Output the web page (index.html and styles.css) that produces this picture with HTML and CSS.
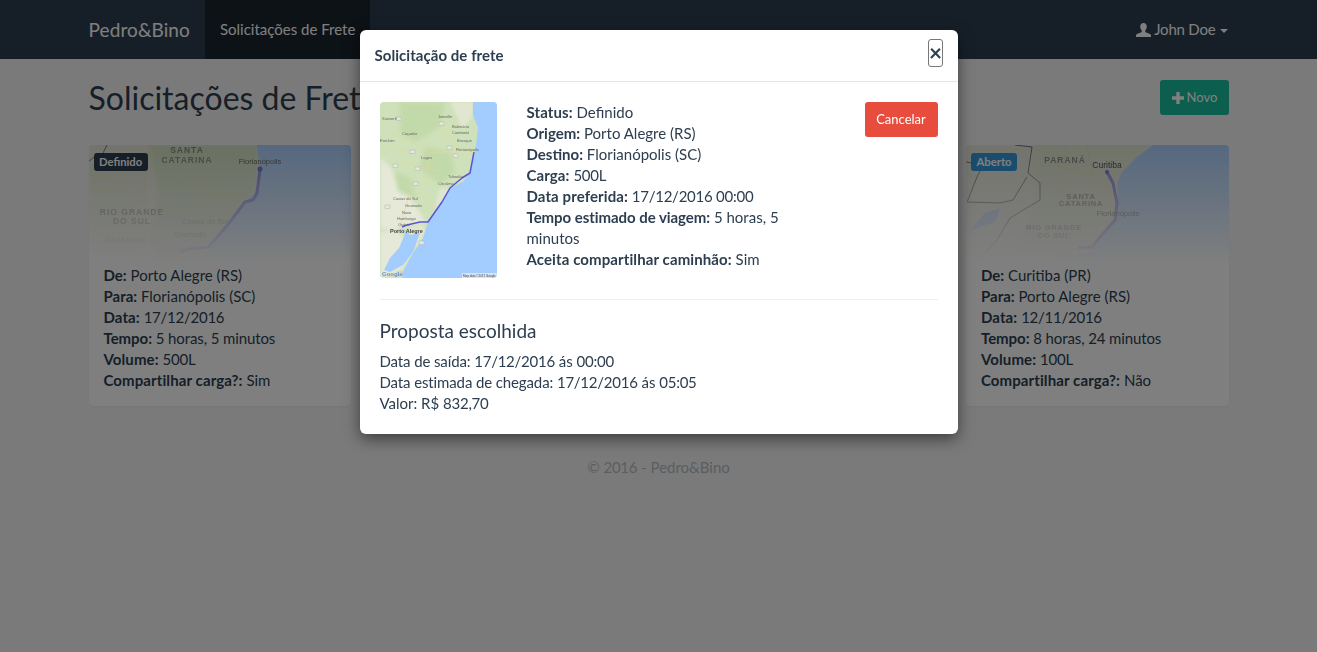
FILE: index.html
```html
<!DOCTYPE html>
<html lang="pt-BR">
<head>
<meta charset="utf-8">
<title>Solicitações de Frete</title>
<link rel="stylesheet" href="styles.css">
</head>
<body>
<nav class="navbar">
  <div class="container nav-inner">
    <a class="brand">Pedro&amp;Bino</a>
    <a class="nav-link active">Solicitações de Frete</a>
    <a class="nav-link user">
      <svg class="user-icon" viewBox="0 0 15 14" width="15" height="14"><path d="M7.5 0C5.4 0 4.2 1.5 4.2 3.6c0 1.5.6 3 1.5 3.8v1.2c0 .5-.5.8-1.6 1.2C2.3 10.5.4 11 0 12.2V14h15v-1.8c-.4-1.2-2.3-1.7-4.1-2.4-1.1-.4-1.6-.7-1.6-1.2V7.4c.9-.8 1.5-2.3 1.5-3.8C10.800 1.500 9.600 0 7.500 0z"/></svg>
      <span class="user-name">John Doe</span><i class="caret"></i>
    </a>
  </div>
</nav>

<main class="container">
  <header class="page-head">
    <h1>Solicitações de Frete</h1>
    <button class="btn btn-new">
      <svg viewBox="0 0 12 12" width="12" height="12"><path d="M4.300 0h3.400v4.300H12v3.400H7.700V12H4.300V7.700H0V4.300h4.300z"/></svg>
      Novo
    </button>
  </header>

  <section class="cards">
    <article class="card">
      <div class="map">
        <svg viewBox="0 0 262 120" width="262" height="120">
          <rect class="land" width="262" height="120"/>
          <path class="green" d="M60 0h108l2 20-2 20-3 10-10 6-15 20-18 24-15 20H70l-10-30 10-40z"/>
          <path class="green-soft" d="M0 20h60l-5 40 10 30-30 30H0z"/>
          <path class="road" d="M0 45h50l30-10 60 15M60 0l-5 45 10 50M20 85l60-20 50 15M150 10l-30 30-10 50M0 30l40 5 20 20M90 20l30 30 30 5M110 60l30-30"/>
          <path class="border" d="M18 0l-5 10M0 16l8-6"/>
          <path class="ocean" d="M168 0l2 20-2 20-3 10-10 6-15 20-18 24-17 20h157V0z"/>
          <path class="route" d="M171 24l-3 24-4 7-8 2-16 21-10 12-11 12-19 2-9 3"/>
          <circle class="pin" cx="171" cy="24" r="2.500"/>
          <text class="state" x="98" y="8">SANTA</text>
          <text class="state" x="98" y="18">CATARINA</text>
          <text class="city" x="171" y="19">Florianópolis</text>
          <text class="state" x="43" y="70">RIO GRANDE</text>
          <text class="state" x="43" y="79">DO SUL</text>
          <text class="city faint" x="116" y="79">Caxias do Sul</text>
          <text class="city faint" x="101" y="92">Gramado</text>
          <text class="city faint" x="36" y="97">Santa Maria</text>
          <text class="city faint" x="91" y="116">Porto Alegre</text>
        </svg>
        <span class="badge badge-dark">Definido</span>
      </div>
      <div class="info">
        <div><b class="k">De:</b> Porto Alegre (RS)</div>
        <div><b class="k">Para:</b> Florianópolis (SC)</div>
        <div><b>Data:</b> <span class="num">17/12/2016</span></div>
        <div><b class="te">Tempo:</b> <span class="time">5 horas, 5 minutos</span></div>
        <div><b>Volume:</b> <span class="num">500</span>L</div>
        <div><b>Compartilhar carga?:</b> Sim</div>
      </div>
    </article>

    <article class="card"></article>
    <article class="card"></article>

    <article class="card">
      <div class="map">
        <svg viewBox="0 0 263 120" width="263" height="120">
          <rect class="land" width="263" height="120"/>
          <path class="green-soft" d="M66 0h121l-16 12-15 15-5 11 1 20-3 17-15 17-8 10-22 18H40l30-60z"/>
          <path class="lake" d="M4 85l14-16 16-6-5 14-15 5z"/>
          <path class="road" d="M80 20l60 10M90 45l60-5M60 75l80 5M100 0l-5 60M120 0l10 40M75 35l30 25"/>
          <path class="border" d="M49 0l17 2-4 26 12 10v17L44 73 31 95 8 120M0 17l17 3-6 12-10 25 33 1 13-3 14-23"/>
          <path class="ocean" d="M187 0l-16 12-15 15-5 11 1 20-3 17-15 17-8 10-22 18h159V0z"/>
          <path class="route" d="M141 27l6 11 4 20-2 17-15 17-8 10-14 1"/>
          <circle class="pin" cx="141" cy="27" r="2"/>
          <text class="state" x="99" y="18">PARANÁ</text>
          <text class="city dark" x="141" y="23">Curitiba</text>
          <text class="state small" x="115" y="54">SANTA</text>
          <text class="state small" x="115" y="61">CATARINA</text>
          <text class="city" x="152" y="71">Florianópolis</text>
          <text class="state small" x="88" y="85">RIO GRANDE</text>
          <text class="state small" x="88" y="93">DO SUL</text>
          <text class="city faint" x="112" y="112">Porto Alegre</text>
        </svg>
        <span class="badge badge-blue">Aberto</span>
      </div>
      <div class="info">
        <div><b class="k">De:</b> Curitiba (PR)</div>
        <div><b class="k">Para:</b> Porto Alegre (RS)</div>
        <div><b>Data:</b> <span class="num">12/11/2016</span></div>
        <div><b class="te">Tempo:</b> <span class="time">8 horas, 24 minutos</span></div>
        <div><b>Volume:</b> <span class="num">100</span>L</div>
        <div><b>Compartilhar carga?:</b> Não</div>
      </div>
    </article>
  </section>

  <footer class="foot">© <span class="num">2016</span> - Pedro&amp;Bino</footer>
</main>

<div class="backdrop"></div>

<div class="modal">
  <div class="modal-head">
    <h4>Solicitação de frete</h4>
    <button class="close">×</button>
  </div>
  <div class="modal-body">
    <div class="modal-grid">
      <svg class="route-map" viewBox="0 0 117 176" width="117" height="176">
        <rect class="mland" width="117" height="176"/>
        <path class="mdark" d="M20 0h45l-5 25-25 15-15-10zM45 45l25 5 5 20-15 12-20-15zM15 70l15 5 5 20-18 5z"/>
        <path class="mwhite" d="M0 55l12 12 6 22 12 6 16 25-24 5-10 5-12-5zM0 130h20l12 20-12 20-20 6z"/>
        <path class="mwhite2" d="M70 0l23 0 0 13-10 15zM60 86l10 0-8 14-8 8zM30 125l12-3 4 8-8 14-8 4z"/>
        <path class="mroad" d="M10 30l40 20 45 0M50 50l-5 40 10 20M20 60l40 10M75 20l-20 30M30 90l-10 35M0 45l30 5M60 20l20 30"/>
        <path class="ocean-m" d="M93 0l0 13 5 13-3 24-5 20-7 10-13 6-8 14-14 20-5 16-13 20-7 14-1 6h95V0z"/>
        <path class="ocean-m" d="M22 126l8 7 10-2-7 19-10 13-13 7-6-2 6-12 9-10 6-14z"/>
        <path class="route-m" d="M94 50l-4 21-8 5-12 10-8 14-14 20-8 0-13 3-5 2"/>
        <g class="shields">
          <rect x="16" y="15" width="5" height="3.500"/>
          <rect x="59" y="20" width="5" height="3.500"/>
          <rect x="30" y="48" width="5" height="3.500"/>
          <rect x="67" y="44" width="5" height="3.500"/>
          <rect x="73" y="52" width="5" height="3.500"/>
          <rect x="13" y="62" width="5" height="3.500"/>
          <rect x="35" y="65" width="5" height="3.500"/>
          <rect x="33" y="80" width="5" height="3.500"/>
          <rect x="5" y="103" width="5" height="3.500"/>
          <rect x="39" y="139" width="5" height="3.500"/>
          <rect x="17" y="170" width="5" height="3.500"/>
        </g>
        <text class="tiny" x="58" y="16">Joinville</text>
        <text class="tiny" x="72" y="26">Balneário</text>
        <text class="tiny" x="72" y="32">Camboriú</text>
        <text class="tiny" x="77" y="40">Brusque</text>
        <text class="tiny" x="76" y="49">Florianópolis</text>
        <text class="tiny" x="41" y="57">Lages</text>
        <text class="tiny" x="22" y="33">Caçador</text>
        <text class="tiny" x="2" y="18">Xanxerê</text>
        <text class="tiny" x="0" y="40">Erechim</text>
        <text class="tiny" x="68" y="76">Tubarão</text>
        <text class="tiny" x="58" y="83">Criciúma</text>
        <text class="tiny" x="13" y="98">Caxias do Sul</text>
        <text class="tiny" x="25" y="105">Gramado</text>
        <text class="tiny" x="22" y="112">Novo</text>
        <text class="tiny" x="17" y="118">Hamburgo</text>
        <text class="tiny" x="18" y="124">Osório</text>
        <text class="tiny bold" x="10" y="131">Porto Alegre</text>
        <text class="tiny google" x="2" y="174">Google</text>
        <rect class="credit-bg" x="82" y="171" width="35" height="5"/>
        <text class="tiny credit" x="83" y="175">Map data ©2017 Google</text>
      </svg>
      <div class="details">
        <div><b>Status:</b> Definido</div>
        <div><b class="k">Origem:</b> Porto Alegre (RS)</div>
        <div><b class="k">Destino:</b> Florianópolis (SC)</div>
        <div><b>Carga:</b> <span class="num">500</span>L</div>
        <div><b>Data preferida:</b> <span class="num">17/12/2016 00:00</span></div>
        <div><b class="te">Tempo estimado de viagem:</b> 5 horas, 5 minutos</div>
        <div><b>Aceita compartilhar caminhão:</b> Sim</div>
      </div>
      <div class="actions"><button class="btn btn-danger">Cancelar</button></div>
    </div>
    <hr class="divider">
    <h4 class="proposal-title">Proposta escolhida</h4>
    <div><span class="lbl">Data de saída:</span> <span class="num">17/12/2016</span> ás <span class="num">00:00</span></div>
    <div><span class="lbl">Data estimada de chegada:</span> <span class="num">17/12/2016</span> ás <span class="num">05:05</span></div>
    <div>Valor: R$ <span class="num">832,70</span></div>
  </div>
</div>
</body>
</html>
```
FILE: styles.css
```css
* { box-sizing: border-box; }
html, body { height: 100%; }
body {
  margin: 0;
  background: #f5f5f5;
  color: #2c3e50;
  font: 15px/21px Lato, "Noto Sans", sans-serif;
  overflow: hidden;
}
.container { width: 1170px; margin: 0 auto; padding: 0 15px; }
.navbar { background: #2c3e50; height: 59px; margin-bottom: 21px; }
.nav-inner { display: flex; align-items: stretch; height: 59px; }
.brand { font-size: 19px; line-height: 59px; color: #fff; margin-right: 15px; letter-spacing: .1px; }
.nav-link { color: #fff; line-height: 59px; padding: 0 15px; }
.nav-link.active { background: #1a242f; }
.user { margin-left: auto; padding: 0 1px 0 0; display: flex; align-items: center; }
.user-icon { fill: #fff; margin-right: 3px; }
.user-name { letter-spacing: -.2px; }
.caret {
  width: 0; height: 0; margin-left: 4px; margin-top: 2px;
  border-top: 4px solid #fff;
  border-left: 4px solid transparent;
  border-right: 4px solid transparent;
}
.page-head { display: flex; justify-content: space-between; align-items: flex-start; height: 65px; }
h1 { margin: 0; font-size: 32px; line-height: 36px; font-weight: 400; }
.btn {
  font: inherit; font-size: 13px; border: 0; border-radius: 3px; color: #fff;
  height: 35px; cursor: pointer;
}
.btn-new { background: #18bc9c; display: flex; align-items: center; justify-content: center; gap: 3px; width: 69px; padding: 0 0 0 1px; }
.btn-new svg { fill: #fff; }
.btn-danger { background: #e74c3c; width: 73px; padding: 0; }
.cards { display: grid; grid-template-columns: repeat(4, 262.5px); gap: 30px; }
.card { background: #fff; border-radius: 4px; height: 261px; box-shadow: 0 1px 2px rgba(0,0,0,.05); overflow: hidden; }
.map { position: relative; height: 120px; overflow: hidden; isolation: isolate; }
.map svg { display: block; filter: blur(.5px); }
.map::after {
  content: ""; position: absolute; inset: 0; z-index: 0;
  background: linear-gradient(rgba(255,255,255,.1), #fff);
}
.badge {
  position: absolute; z-index: 1; left: 5px; top: 8px;
  height: 18px; padding: 0 5.5px; border-radius: 3px;
  font-size: 11.25px; line-height: 18px; font-weight: 700; color: #fff;
}
.badge-dark { background: #2c3e50; }
.badge-blue { background: #3498db; }
.info { padding: 0 15px 15px; }
b { font-weight: 700; letter-spacing: .1px; }
b.k { letter-spacing: 0; }
b.te { letter-spacing: -.05px; }
.num { letter-spacing: -.25px; }
.time { letter-spacing: -.12px; }
.lbl { letter-spacing: -.12px; }
.land { fill: #e6e6d8; }
.green { fill: #cfe0bb; filter: blur(2px); }
.green-soft { fill: #dde5cb; filter: blur(2px); }
.road { fill: none; stroke: #ecd78e; stroke-width: .6; }
.border { fill: none; stroke: #555; stroke-width: .9; }
.lake { fill: #a3ccff; }
.ocean { fill: #a3ccff; }
.route { fill: none; stroke: #5a55d8; stroke-width: 3; stroke-opacity: .8; stroke-linejoin: round; }
.pin { fill: #4b44c8; }
.state { font: 700 8.500px "Liberation Sans", sans-serif; letter-spacing: 1px; fill: #77786e; text-anchor: middle; }
.state.small { font-size: 7.500px; letter-spacing: .8px; }
.city { font: 7.500px "Liberation Sans", sans-serif; fill: #444; text-anchor: middle; }
.city.dark { fill: #111; font-size: 8.500px; }
.city.faint { fill: #888; }
.foot { text-align: center; color: #b4bcc2; margin-top: 51px; }
.backdrop { position: fixed; inset: 0; background: rgba(0,0,0,.5); }
.modal {
  position: absolute; top: 30px; left: 359.5px; width: 598px;
  background: #fff; border-radius: 6px;
  box-shadow: 0 5px 15px rgba(0,0,0,.5);
}
.modal-head {
  height: 52px; padding: 9px 15px 0; border-bottom: 1px solid #e5e5e5;
  display: flex; justify-content: space-between; align-items: flex-start;
}
.modal-head h4 { margin: 6px 0 0; font-size: 15px; font-weight: 700; line-height: 21px; letter-spacing: .05px; }
.close {
  font: 700 22.500px/1 Lato, sans-serif; color: #2c3e50; background: none;
  border: 1px solid #777; border-radius: 3px; padding: 0;
  width: 15px; height: 28px; margin-right: -.5px;
}
.modal-body { padding: 20px; }
.modal-grid { display: grid; grid-template-columns: 117px 264px 117px; gap: 30px; }
.route-map { display: block; border-radius: 4px; filter: blur(.45px); }
.mland { fill: #cfe1ba; }
.mdark { fill: #c2d9aa; filter: blur(2px); }
.mwhite { fill: #e6e9d8; filter: blur(2px); }
.mwhite2 { fill: #e0e6cf; filter: blur(1.500px); }
.mroad { fill: none; stroke: #e9d88f; stroke-width: .6; }
.ocean-m { fill: #a3ccff; }
.route-m { fill: none; stroke: #5a55d8; stroke-width: 1.500; stroke-linejoin: round; }
.shields rect { fill: #e4e8dc; stroke: #a8a8a8; stroke-width: .4; }
.tiny { font: 4px "Liberation Sans", sans-serif; fill: #666; }
.tiny.bold { font-weight: 700; font-size: 5.500px; fill: #444; }
.tiny.google { font-size: 6px; font-weight: 700; fill: #6a90d0; }
.tiny.credit { font-size: 3px; fill: #444; }
.credit-bg { fill: #eee; opacity: .7; }
.actions { text-align: right; }
.divider { border: 0; border-top: 1px solid #ecf0f1; margin: 21px 0; }
.proposal-title { margin: 0 0 10px; font-size: 19px; line-height: 20px; font-weight: 400; }
```
